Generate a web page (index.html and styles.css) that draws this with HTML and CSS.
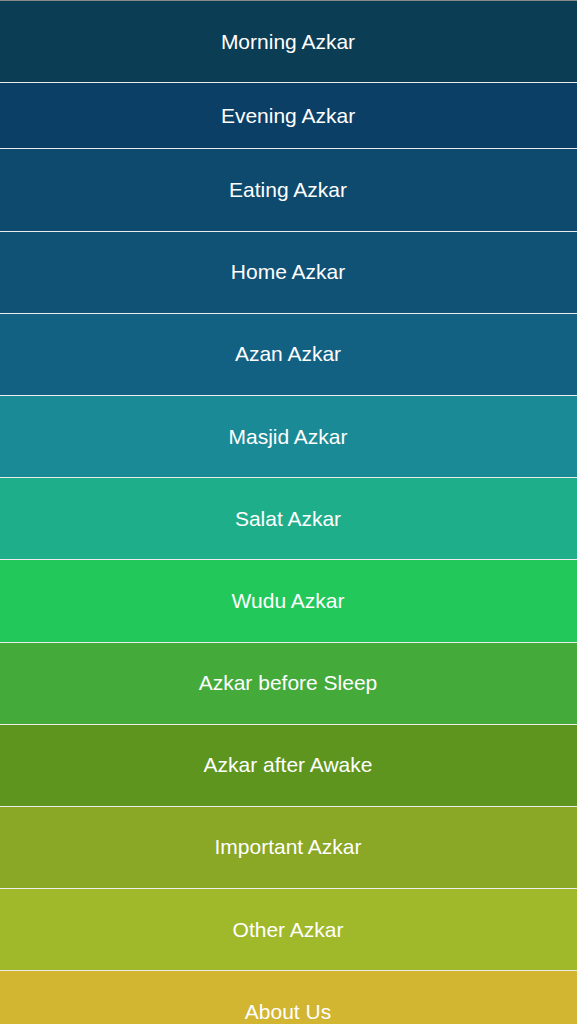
FILE: index.html
```html
<!DOCTYPE html>
<html>
<head>
<meta charset="utf-8">
<link rel="stylesheet" href="styles.css">
</head>
<body>
<nav class="menu">
  <a class="item c1 first">Morning Azkar</a>
  <a class="item c2 short">Evening Azkar</a>
  <a class="item c3">Eating Azkar</a>
  <a class="item c4">Home Azkar</a>
  <a class="item c5">Azan Azkar</a>
  <a class="item c6">Masjid Azkar</a>
  <a class="item c7">Salat Azkar</a>
  <a class="item c8">Wudu Azkar</a>
  <a class="item c9">Azkar before Sleep</a>
  <a class="item c10">Azkar after Awake</a>
  <a class="item c11">Important Azkar</a>
  <a class="item c12">Other Azkar</a>
  <a class="item c13">About Us</a>
</nav>
</body>
</html>
```
FILE: styles.css
```css
html, body {
  margin: 0;
  padding: 0;
  background: #d2b530;
  overflow: hidden;
}
.menu {
  display: flex;
  flex-direction: column;
  border-top: 1px solid #8a8a8a;
  font-family: "Liberation Sans", Arial, sans-serif;
}
.item {
  display: flex;
  align-items: center;
  justify-content: center;
  height: 81.2px;
  border-bottom: 1px solid #ececec;
  color: #ffffff;
  font-size: 21px;
  text-decoration: none;
  flex-shrink: 0;
  padding-right: 1px;
}
.item.first { height: 81px; }
.item.short { height: 65.4px; }
.c1 { background: #0b3d54; }
.c2 { background: #0c3f66; }
.c3 { background: #0e4a6e; }
.c4 { background: #0f5275; }
.c5 { background: #126183; }
.c6 { background: #1a8a96; }
.c7 { background: #1eae8a; }
.c8 { background: #22c85a; }
.c9 { background: #44ab3a; }
.c10 { background: #5e951f; }
.c11 { background: #8aa725; }
.c12 { background: #a0b92b; }
.c13 { background: #d2b530; border-bottom: none; }
```
